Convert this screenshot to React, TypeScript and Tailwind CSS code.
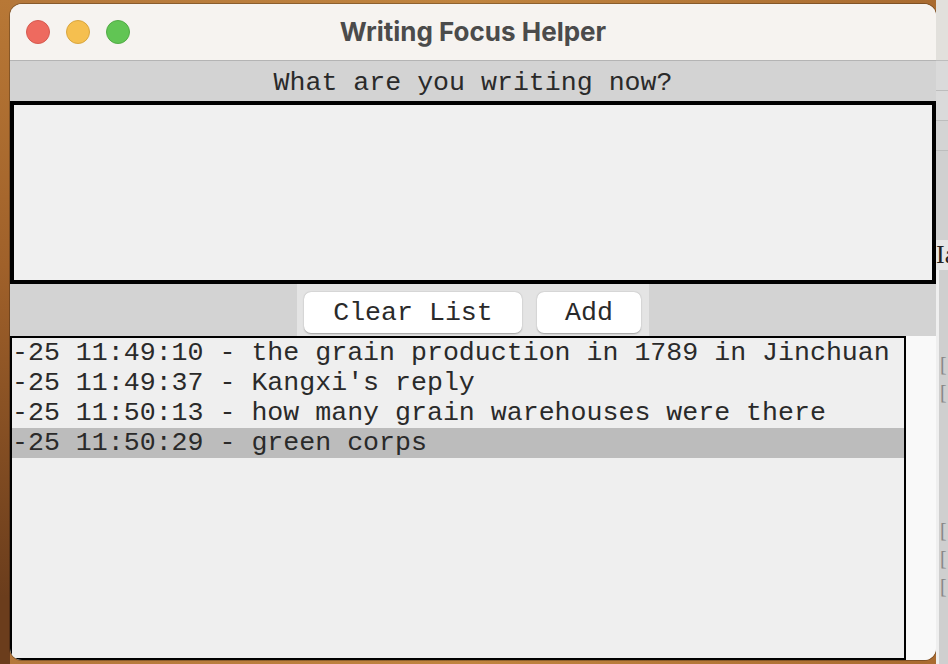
import React from "react";

const rows = [
  "-25 11:49:10 - the grain production in 1789 in Jinchuan",
  "-25 11:49:37 - Kangxi's reply",
  "-25 11:50:13 - how many grain warehouses were there",
  "-25 11:50:29 - green corps",
];

function TrafficLights() {
  return (
    <div className="flex gap-4 pl-[16px]">
      <span className="w-6 h-6 rounded-full bg-[#ee6a5f] border border-[#d65a50]" />
      <span className="w-6 h-6 rounded-full bg-[#f5bf4f] border border-[#d9a63f]" />
      <span className="w-6 h-6 rounded-full bg-[#61c554] border border-[#52ab46]" />
    </div>
  );
}

function Window() {
  return (
    <div className="w-[926px] h-[656px] mt-[4px] rounded-[12px] overflow-hidden flex flex-col bg-[#f8f8f8] shadow-[0_0_0_1px_rgba(0,0,0,0.25)] font-['Courier_New','Courier','Liberation_Mono',monospace] text-[#2a2a2a]">
      {/* title bar */}
      <div className="relative h-[57px] shrink-0 flex items-center bg-[#f6f3f0] border-b border-[#b4b4b4]">
        <TrafficLights />
        <div className="absolute inset-0 flex items-center justify-center font-['Inter',sans-serif] font-bold text-[26px] text-[#4b4b4b] pb-[1px]">
          Writing Focus Helper
        </div>
      </div>

      {/* label */}
      <div className="h-[40px] shrink-0 bg-[#d3d3d3] flex items-center justify-center text-[26.6px] leading-none pt-[5px]">
        What are you writing now?
      </div>

      {/* text area */}
      <div className="h-[183px] shrink-0 border-4 border-black bg-[#f0f0f0]" />

      {/* buttons */}
      <div className="h-[52px] shrink-0 bg-[#d3d3d3] flex justify-center">
        <div className="w-[352px] bg-[#e4e4e4] flex gap-[15px] pl-[7px] pt-[8px] pb-[3px]">
          <button className="w-[218px] h-[41px] rounded-[7px] bg-white shadow-[0_0.5px_1.5px_rgba(0,0,0,0.3)] text-[26.6px] leading-none text-[#2a2a2a] pt-[1px]">
            Clear List
          </button>
          <button className="w-[104px] h-[41px] rounded-[7px] bg-white shadow-[0_0.5px_1.5px_rgba(0,0,0,0.3)] text-[26.6px] leading-none text-[#2a2a2a] pt-[1px]">
            Add
          </button>
        </div>
      </div>

      {/* list */}
      <div className="flex-1 flex">
        <div className="w-[896px] border-2 border-black bg-[#efefef] overflow-hidden">
          {rows.map((r, i) => (
            <div
              key={i}
              className={
                "h-[30px] leading-[30px] text-[26.6px] whitespace-nowrap " +
                (i === 3 ? "bg-[#bcbcbc]" : "")
              }
            >
              {r}
            </div>
          ))}
        </div>
        <div className="flex-1 bg-[#f9f9f9]" />
      </div>
    </div>
  );
}

function BackWindow() {
  return (
    <div className="w-[12px] h-full flex flex-col bg-[#d6d6d6] font-['Liberation_Serif',serif] text-[#222]">
      <div className="h-[60px] bg-[#e2e0dc]" />
      <div className="h-[30px] border-t border-[#bdbdbd] bg-[#dadada]" />
      <div className="h-[30px] border-t border-[#bdbdbd] bg-[#dadada]" />
      <div className="h-[30px] border-t border-[#bdbdbd] bg-[#d4d4d4]" />
      <div className="h-[90px] border-t border-[#bdbdbd] bg-[#d0d0d0]" />
      <div className="h-[30px] bg-[#e6e6e6] text-[26px] leading-[30px] overflow-hidden whitespace-nowrap">
        Ia
      </div>
      <div className="flex-1 bg-[#cfcfcf] border-l-[3px] border-[#efefef] text-[#888] text-[20px] leading-[28px] pt-[80px] pl-[1px]">
        <div>[</div>
        <div>[</div>
        <div className="mt-[110px]">[</div>
        <div>[</div>
        <div>[</div>
      </div>
    </div>
  );
}

export default function App() {
  return (
    <div className="w-[948px] h-[664px] overflow-hidden flex bg-[linear-gradient(90deg,#8f5424_0%,#b4773b_1%,#c0843f_50%,#a86a30_100%)]">
      <div className="w-[10px] bg-[linear-gradient(180deg,#b87836,#a0612a_40%,#6b3d1c_90%)]" />
      <Window />
      <BackWindow />
    </div>
  );
}
